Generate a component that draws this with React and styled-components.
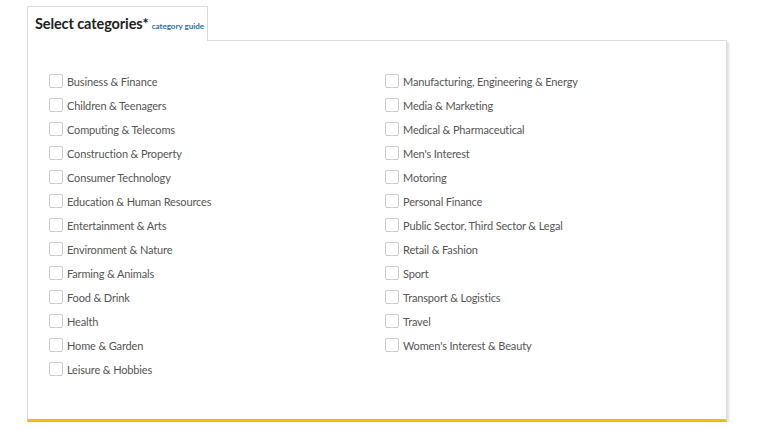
import React from 'react'
import styled, { createGlobalStyle } from 'styled-components'

const left = [
  'Business & Finance',
  'Children & Teenagers',
  'Computing & Telecoms',
  'Construction & Property',
  'Consumer Technology',
  'Education & Human Resources',
  'Entertainment & Arts',
  'Environment & Nature',
  'Farming & Animals',
  'Food & Drink',
  'Health',
  'Home & Garden',
  'Leisure & Hobbies',
]

const right = [
  'Manufacturing, Engineering & Energy',
  'Media & Marketing',
  'Medical & Pharmaceutical',
  "Men's Interest",
  'Motoring',
  'Personal Finance',
  'Public Sector, Third Sector & Legal',
  'Retail & Fashion',
  'Sport',
  'Transport & Logistics',
  'Travel',
  "Women's Interest & Beauty",
]

const GlobalStyle = createGlobalStyle`
  body {
    margin: 0;
    background: #fff;
    font-family: Lato, "Liberation Sans", sans-serif;
  }
`

const Category = ({ label }) => (
  <Row>
    <Box type="checkbox" />
    <span>{label}</span>
  </Row>
)

const App = () => {
  return (
    <Wrapper>
      <GlobalStyle />
      <Tab>
        <Title>Select categories*</Title>
        <Guide href="#">category guide</Guide>
      </Tab>
      <Panel>
        <Columns>
          <Column>
            {left.map(c => <Category key={c} label={c} />)}
          </Column>
          <Column>
            {right.map(c => <Category key={c} label={c} />)}
          </Column>
        </Columns>
      </Panel>
    </Wrapper>
  )
}

const Wrapper = styled.div`
  padding: 6px 0 0 27px;
`

const Tab = styled.div`
  position: relative;
  z-index: 1;
  box-sizing: border-box;
  width: 181px;
  height: 35px;
  padding: 8px 0 0 7px;
  background: #fff;
  border: 1px solid #dcdcdc;
  border-bottom: none;
  display: flex;
  align-items: baseline;
  gap: 3px;
`

const Title = styled.h2`
  margin: 0;
  font-size: 14.5px;
  font-weight: 700;
  letter-spacing: -0.1px;
  color: #222;
`

const Guide = styled.a`
  font-size: 8px;
  font-weight: 700;
  color: #1f6fa3;
  text-decoration: none;
`

const Panel = styled.div`
  box-sizing: border-box;
  width: 700px;
  margin-top: -1px;
  padding: 28px 0 38px 21px;
  background: #fff;
  border: 1px solid #dcdcdc;
  border-bottom: 3px solid #fcb514;
  box-shadow: 2px 2px 2px rgba(0, 0, 0, 0.12);
`

const Columns = styled.div`
  display: grid;
  grid-template-columns: 336px 1fr;
`

const Column = styled.div`
  display: flex;
  flex-direction: column;
`

const Row = styled.label`
  display: flex;
  align-items: center;
  height: 24px;
  gap: 4px;
  font-size: 11px;
  letter-spacing: -0.15px;
  color: #555;
`

const Box = styled.input`
  appearance: none;
  margin: 0;
  width: 14px;
  height: 14px;
  box-sizing: border-box;
  border: 1px solid #ccc;
  border-radius: 2px;
  background: #fff;
`

export default App
